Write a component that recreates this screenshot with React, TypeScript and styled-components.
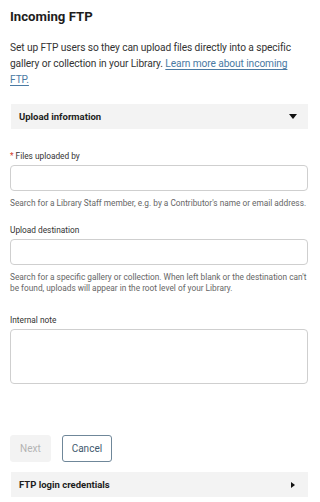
import React from 'react';
import styled, { createGlobalStyle } from 'styled-components';

const GlobalStyle = createGlobalStyle`
  html, body {
    margin: 0;
    padding: 0;
    background: #ffffff;
  }
  body {
    font-family: Roboto, "Liberation Sans", Arial, sans-serif;
    color: #222222;
  }
`;

const Page = styled.div`
  width: 320px;
  height: 502px;
  box-sizing: border-box;
  padding: 7px 12px 0 10px;
  overflow: hidden;
`;

const Title = styled.h1`
  margin: 0;
  font-size: 13.2px;
  line-height: 20px;
  font-weight: 700;
  color: #1d1d1d;
`;

const Intro = styled.p`
  margin: 13px 0 0;
  font-size: 10.2px;
  letter-spacing: -0.1px;
  line-height: 16px;
  color: #333333;

  a {
    color: #4a7aa3;
    text-decoration: underline;
    text-underline-offset: 2px;
  }
`;

const Section = styled.div<{ $top: number }>`
  display: flex;
  align-items: center;
  justify-content: space-between;
  height: 25px;
  margin-left: 1px;
  padding: 0 11px 0 8px;
  background: #f3f3f3;
  margin-top: ${(p) => p.$top}px;
  font-size: 9.5px;
  font-weight: 700;
  color: #1d1d1d;
`;

const Caret = styled.span<{ $open?: boolean }>`
  width: 0;
  height: 0;
  ${(p) =>
    p.$open
      ? `border-left: 4px solid transparent;
         border-right: 4px solid transparent;
         border-top: 5px solid #111;`
      : `border-top: 3.5px solid transparent;
         border-bottom: 3.5px solid transparent;
         border-left: 4px solid #111;
         margin-right: 2px;`}
`;

const Field = styled.div<{ $top: number }>`
  display: flex;
  flex-direction: column;
  margin-top: ${(p) => p.$top}px;
`;

const Label = styled.label`
  font-size: 8.3px;
  line-height: 12px;
  color: #333333;
  margin-bottom: 3px;
`;

const Required = styled.span`
  color: #d33a2c;
  margin-right: 2px;
`;

const Input = styled.input`
  box-sizing: border-box;
  height: 26px;
  width: 100%;
  border: 1px solid #cfcfcf;
  border-radius: 4px;
  background: #fff;
  margin: 0;
`;

const Note = styled.textarea`
  box-sizing: border-box;
  display: block;
  height: 55px;
  width: 100%;
  border: 1px solid #cfcfcf;
  border-radius: 4px;
  background: #fff;
  margin: 0;
  resize: none;
`;

const Help = styled.div`
  margin-top: 7px;
  font-size: 8.3px;
  line-height: 11px;
  color: #666666;
`;

const Actions = styled.div`
  display: flex;
  gap: 11px;
  margin-top: 51px;
`;

const Button = styled.button<{ $variant: 'disabled' | 'outline' }>`
  box-sizing: border-box;
  height: 27px;
  padding: 0 9px;
  border-radius: 3px;
  font-family: Roboto, "Liberation Sans", Arial, sans-serif;
  font-size: 10px;
  ${(p) =>
    p.$variant === 'disabled'
      ? `background: #f3f3f3; border: 1px solid #f3f3f3; color: #b3b3b3;`
      : `background: #fff; border: 1px solid #6f8799; color: #3f5a6e;`}
`;

export default function App() {
  return (
    <>
      <GlobalStyle />
      <Page>
        <Title>Incoming FTP</Title>
        <Intro>
          Set up FTP users so they can upload files directly into a specific
          gallery or collection in your Library.{' '}
          <a href="#">Learn more about incoming FTP.</a>
        </Intro>
        <Section $top={16}>
          Upload information
          <Caret $open />
        </Section>
        <Field $top={21}>
          <Label>
            <Required>*</Required>Files uploaded by
          </Label>
          <Input type="text" />
          <Help>
            Search for a Library Staff member, e.g. by a Contributor's name or
            email address.
          </Help>
        </Field>
        <Field $top={15}>
          <Label>Upload destination</Label>
          <Input type="text" />
          <Help>
            Search for a specific gallery or collection. When left blank or the
            destination can't be found, uploads will appear in the root level of
            your Library.
          </Help>
        </Field>
        <Field $top={20}>
          <Label>Internal note</Label>
          <Note />
        </Field>
        <Actions>
          <Button $variant="disabled" disabled>
            Next
          </Button>
          <Button $variant="outline">Cancel</Button>
        </Actions>
        <Section $top={10}>
          FTP login credentials
          <Caret />
        </Section>
      </Page>
    </>
  );
}
